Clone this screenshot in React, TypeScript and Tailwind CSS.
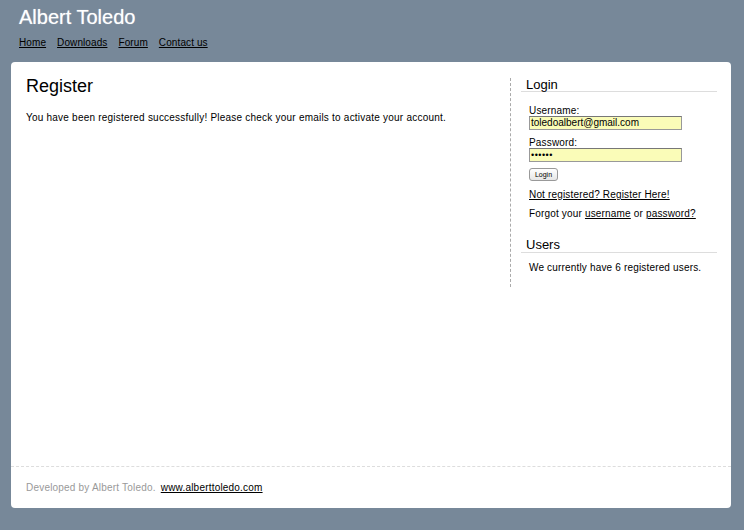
export default function App() {
  return (
    <div className="min-h-[530px] bg-[#778899] font-['Liberation_Sans',Arial,sans-serif] text-black">
      <header className="px-[19px] pt-[6px]">
        <h1 className="text-[20px] leading-[22px] text-white [text-shadow:0_0_1px_rgba(255,255,255,0.6)]">Albert Toledo</h1>
        <nav className="mt-[9px] flex gap-[11px] text-[10px] leading-[12px] tracking-[0.1px]">
          <a className="underline" href="#">Home</a>
          <a className="underline" href="#">Downloads</a>
          <a className="underline" href="#">Forum</a>
          <a className="underline" href="#">Contact us</a>
        </nav>
      </header>

      <div className="ml-[11px] mt-[13px] w-[720px] rounded-[4px] bg-white">
        <div className="flex h-[404px]">
          <main className="w-[499px] px-[15px] pt-[14px]">
            <h2 className="text-[18px] leading-[20px]">Register</h2>
            <p className="mt-[16px] text-[10px] leading-[12px] tracking-[0.22px]">
              You have been registered successfully! Please check your emails to activate your account.
            </p>
          </main>

          <aside className="mt-[16px] h-[209px] border-l border-dashed border-[#aaa] pl-[10px] text-[10px] tracking-[0.17px]">
            <div className="w-[196px]">
              <h3 className="border-b border-[#ddd] pl-[5px] text-[13px] leading-[13px] tracking-normal">Login</h3>
              <div className="pl-[8px] pt-[13px] leading-[12px]">
                <label className="block leading-[11px]">Username:</label>
                <div className="h-[14px] w-[153px] border border-[#999] border-t-[#777] bg-[#fafcb8] pl-[1px] leading-[12px] tracking-normal">
                  toledoalbert@gmail.com
                </div>
                <label className="mt-[7px] block leading-[11px]">Password:</label>
                <div className="h-[14px] w-[153px] border border-[#999] border-t-[#777] bg-[#fafcb8] pl-[1px] text-[9px] leading-[12px] tracking-[0.5px]">
                  ••••••
                </div>
                <button className="mt-[6px] flex h-[13px] w-[29px] items-center justify-center rounded-[3px] border border-[#999] bg-gradient-to-b from-white to-[#e6e6e6] text-[7px] leading-[8px] tracking-normal">
                  Login
                </button>
                <a href="#" className="mt-[8px] block underline">Not registered? Register Here!</a>
                <p className="mt-[7px]">
                  Forgot your <a href="#" className="underline">username</a> or{" "}
                  <a href="#" className="underline">password?</a>
                </p>
              </div>

              <h3 className="mt-[18px] border-b border-[#ddd] pl-[5px] text-[13px] leading-[14px] tracking-normal">Users</h3>
              <p className="pl-[8px] pt-[9px] leading-[12px]">We currently have 6 registered users.</p>
            </div>
          </aside>
        </div>

        <footer className="flex h-[42px] items-center border-t border-dashed border-[#ddd] px-[15px] text-[10px] leading-[12px] tracking-[0.2px]">
          <span className="text-[#999]">Developed by Albert Toledo.</span>
          <a href="#" className="ml-[5px] underline">www.alberttoledo.com</a>
        </footer>
      </div>
    </div>
  );
}
